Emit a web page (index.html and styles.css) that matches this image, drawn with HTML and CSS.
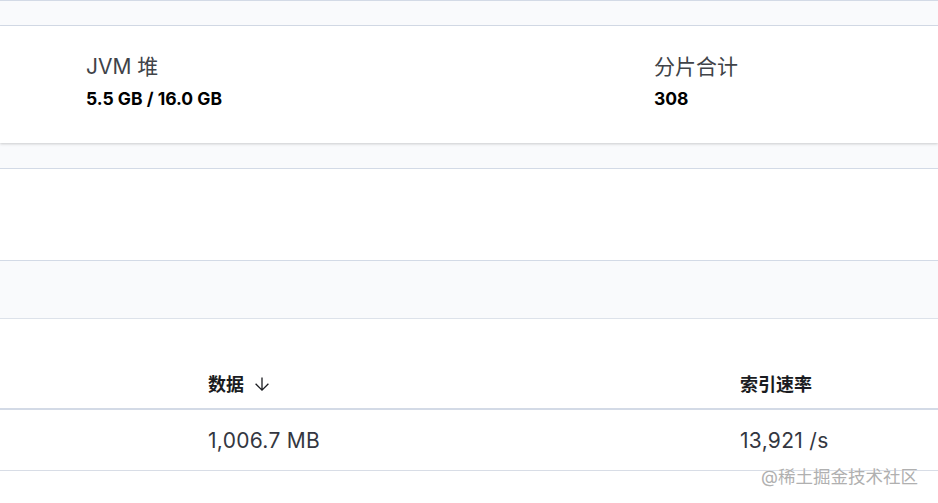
FILE: index.html
```html
<!DOCTYPE html>
<html lang="zh">
<head>
<meta charset="utf-8">
<link rel="stylesheet" href="styles.css">
</head>
<body>
<div class="band band-top"></div>
<section class="panel stats">
  <div class="stat">
    <div class="stat-label">JVM 堆</div>
    <div class="stat-value">5.5 GB / 16.0 GB</div>
  </div>
  <div class="stat">
    <div class="stat-label">分片合计</div>
    <div class="stat-value">308</div>
  </div>
</section>
<div class="band band-mid"></div>
<section class="panel panel-two">
  <div class="blank"></div>
  <div class="subbar"></div>
</section>
<section class="table">
  <div class="row head">
    <div class="cell">数据
      <svg class="sort" width="16" height="16" viewBox="0 0 16 16" aria-hidden="true"><path d="M8 1.5v12.6M1.6 7.7 8 14.1l6.4-6.4" fill="none" stroke="#1a1c21" stroke-width="1.3"/></svg>
    </div>
    <div class="cell">索引速率</div>
  </div>
  <div class="row body">
    <div class="cell">1,006.7 MB</div>
    <div class="cell">13,921 /s</div>
  </div>
</section>
<div class="watermark">@稀土掘金技术社区</div>
</body>
</html>
```
FILE: styles.css
```css
html, body {
  margin: 0;
  padding: 0;
}
body {
  background: #fafbfd;
  font-family: Inter, "Noto Sans CJK SC", sans-serif;
  color: #343741;
  width: 938px;
  height: 503px;
  overflow: hidden;
  position: relative;
}
.band {
  background: #f9fafc;
}
.band-top {
  height: 24px;
  border-top: 1px solid #d3dae6;
  border-bottom: 1px solid #d3dae6;
}
.panel {
  background: #fff;
}
.stats {
  height: 117px;
  box-sizing: border-box;
  padding: 28px 0 0 86px;
  display: grid;
  grid-template-columns: 568px 1fr;
  box-shadow: 0 1px 2px rgba(0, 0, 0, 0.12), 0 2px 3px rgba(0, 0, 0, 0.05);
  position: relative;
}
.stat-label {
  font-size: 21px;
  line-height: 26px;
  color: #404348;
  font-weight: 400;
}
.stat-value {
  font-size: 17.5px;
  line-height: 22px;
  margin-top: 8px;
  font-weight: 700;
  color: #000;
}
.band-mid {
  height: 25px;
}
.panel-two {
  border-top: 1px solid #d3dae6;
}
.blank {
  height: 91px;
  border-bottom: 1px solid #d3dae6;
}
.subbar {
  height: 57px;
  background: #f9fafc;
  border-bottom: 1px solid #dde2ea;
  box-shadow: 0 2px 3px rgba(0, 0, 0, 0.05);
}
.table {
  background: #fff;
  padding-top: 39px;
  height: 184px;
  box-sizing: border-box;
}
.row {
  display: grid;
  grid-template-columns: 532px 1fr;
  padding-left: 208px;
  align-items: center;
}
.head {
  height: 50px;
  border-bottom: 2px solid #d3dae6;
  font-size: 18px;
  font-weight: 700;
  color: #1a1c21;
}
.head .cell {
  display: flex;
  align-items: center;
  gap: 10px;
}
.sort {
  display: block;
  margin-top: 1px;
}
.body {
  height: 60px;
  border-bottom: 1px solid #d8dde6;
  font-size: 21px;
  letter-spacing: 0.3px;
  color: #343741;
}
.watermark {
  position: absolute;
  left: 761px;
  top: 466px;
  font-size: 17.5px;
  line-height: 22px;
  color: #b0b0b0;
  white-space: nowrap;
  text-shadow: 0 0 1px #fff;
}
```
